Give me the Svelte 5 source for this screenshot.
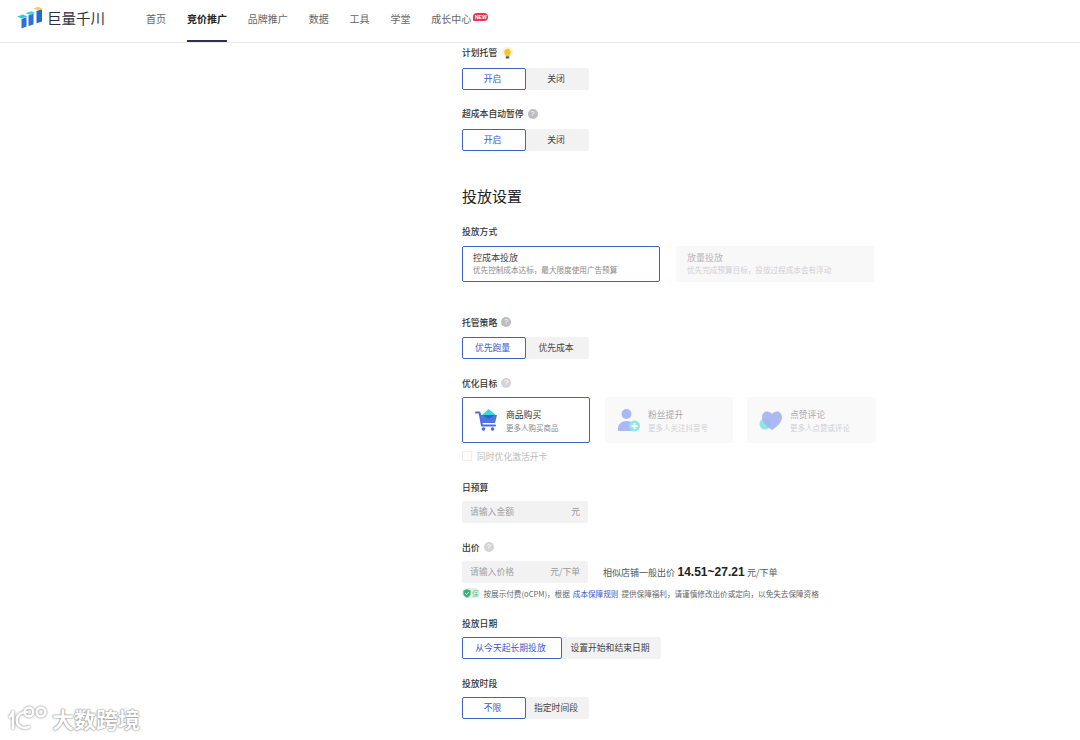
<script>
    const navItems = ['首页', '竞价推广', '品牌推广', '数据', '工具', '学堂', '成长中心'];
    const activeNav = '竞价推广';

    const goals = [
        { key: 'buy', title: '商品购买', desc: '更多人购买商品', active: true },
        { key: 'fans', title: '粉丝提升', desc: '更多人关注抖音号', active: false },
        { key: 'like', title: '点赞评论', desc: '更多人点赞或评论', active: false }
    ];
</script>

<header class="topbar">
    <div class="logo">
        <svg class="logo-mark" width="26" height="23" viewBox="0 0 26 23">
            <path d="M0 10.5 L6 8.5 L10.5 10.5 L4.5 12.5 Z" fill="#35c9d6"/>
            <path d="M4.5 13 L9.5 11.2 L9.5 20.5 L4.5 22.5 Z" fill="#2f6fdc"/>
            <path d="M8.5 7 L14.5 5.2 L18.5 7 L12.5 9 Z" fill="#45d3d8"/>
            <path d="M11.5 9.5 L16.5 7.8 L16.5 18.5 L11.5 20 Z" fill="#2f6fdc"/>
            <path d="M16.5 2.5 L21 0.8 L25.5 2.5 L21 4.2 Z" fill="#f3cf55"/>
            <path d="M19.5 5 L25 3.2 L25 15.5 L19.5 17.2 Z" fill="#2866d0"/>
        </svg>
        <span class="logo-text">巨量千川</span>
    </div>
    <nav class="nav">
        {#each navItems as item}
            <span class="nav-item" class:active={item === activeNav}>
                {item}
                {#if item === '成长中心'}
                    <span class="new-badge">NEW</span>
                {/if}
            </span>
        {/each}
    </nav>
</header>

<main class="form">
    <div class="field">
        <div class="label">计划托管
            <svg class="bulb" width="13" height="13" viewBox="0 0 13 13">
                <circle cx="6.5" cy="5.5" r="6" fill="#fdf6d8"/>
                <path d="M6.5 1.8 a3.4 3.4 0 0 1 2 6.1 v1 h-4 v-1 a3.4 3.4 0 0 1 2-6.1 Z" fill="#f5c52c"/>
                <rect x="4.8" y="9.3" width="3.4" height="2.2" rx="0.6" fill="#555a66"/>
            </svg>
        </div>
        <div class="toggle">
            <span class="opt on">开启</span>
            <span class="opt">关闭</span>
        </div>
    </div>

    <div class="field">
        <div class="label">超成本自动暂停 <span class="help">?</span></div>
        <div class="toggle">
            <span class="opt on">开启</span>
            <span class="opt">关闭</span>
        </div>
    </div>

    <h2 class="section-title">投放设置</h2>

    <div class="field way-field">
        <div class="label">投放方式</div>
        <div class="way-row">
            <div class="way-card selected">
                <div class="way-title">控成本投放</div>
                <div class="way-desc">优先控制成本达标，最大限度使用广告预算</div>
            </div>
            <div class="way-card disabled">
                <div class="way-title">放量投放</div>
                <div class="way-desc">优先完成预算目标，投放过程成本会有浮动</div>
            </div>
        </div>
    </div>

    <div class="field">
        <div class="label low">托管策略 <span class="help">?</span></div>
        <div class="toggle">
            <span class="opt on">优先跑量</span>
            <span class="opt">优先成本</span>
        </div>
    </div>

    <div class="field goal-field">
        <div class="label low tight">优化目标 <span class="help light">?</span></div>
        <div class="goal-row">
            {#each goals as goal}
                <div class="goal-card" class:selected={goal.active} class:disabled={!goal.active}>
                    {#if goal.key === 'buy'}
                        <svg class="goal-icon" width="24" height="24" viewBox="0 0 24 24">
                            <path d="M1 4.5 h3.5 l2.5 13 h13" fill="none" stroke="#4a6ee0" stroke-width="2" stroke-linecap="round" stroke-linejoin="round"/>
                            <path d="M5 7 H22 L20 15 H7 Z" fill="#5273e6"/>
                            <path d="M13.5 1 L20.5 6.5 L13.5 11.5 L7.5 6.5 Z" fill="#3fd5d3"/>
                            <path d="M7.5 7 H20 L13.5 11.5 Z" fill="#2d63d8"/>
                            <circle cx="8.5" cy="21" r="1.8" fill="#4a6ee0"/>
                            <circle cx="17.5" cy="21" r="1.8" fill="#4a6ee0"/>
                        </svg>
                    {:else if goal.key === 'fans'}
                        <svg class="goal-icon" width="24" height="24" viewBox="0 0 24 24">
                            <circle cx="9.5" cy="6" r="5" fill="#aab8f3"/>
                            <path d="M1 23 C0 16 5 13 9.5 13 C14 13 19 16 18 23 Z" fill="#aab8f3"/>
                            <circle cx="17.5" cy="18" r="5.5" fill="#8fe6e3"/>
                            <path d="M17.5 15 v6 M14.5 18 h6" stroke="#fff" stroke-width="1.8"/>
                        </svg>
                    {:else}
                        <svg class="goal-icon" width="24" height="24" viewBox="0 0 24 24">
                            <circle cx="6" cy="16" r="5.5" fill="#8fe6e3"/>
                            <path d="M13 22 C7 18 3 14 3 9 C3 3 10 1.5 13 6 C16 1.5 23 3 23 9 C23 14 19 18 13 22 Z" fill="#a4b4f2" opacity="0.92"/>
                        </svg>
                    {/if}
                    <div>
                        <div class="goal-title">{goal.title}</div>
                        <div class="goal-desc">{goal.desc}</div>
                    </div>
                </div>
            {/each}
        </div>
        <div class="check-row">
            <span class="checkbox"></span>
            <span>同时优化激活开卡</span>
        </div>
    </div>

    <div class="field">
        <div class="label low tight">日预算</div>
        <div class="input">
            <span>请输入金额</span>
            <span class="unit">元</span>
        </div>
    </div>

    <div class="field bid-field">
        <div class="label low tight">出价 <span class="help light">?</span></div>
        <div class="bid-row">
            <div class="input">
                <span>请输入价格</span>
                <span class="unit">元/下单</span>
            </div>
            <div class="bid-hint">
                相似店铺一般出价 <b class="bid-range">14.51~27.21</b> 元/下单
            </div>
        </div>
        <div class="note">
            <span class="shield">
                <svg width="8" height="9" viewBox="0 0 8 9">
                    <path d="M4 0.3 L7.6 1.4 V4.5 C7.6 6.6 5.8 8 4 8.7 C2.2 8 0.4 6.6 0.4 4.5 V1.4 Z" fill="#38b27a"/>
                    <path d="M2.3 4.3 L3.6 5.5 L5.8 3.1" fill="none" stroke="#fff" stroke-width="0.9"/>
                </svg>
                <span>保</span>
            </span>
            <span>按展示付费(oCPM)，根据</span>
            <span class="link">成本保障规则</span>
            <span>提供保障福利，请谨慎修改出价或定向，以免失去保障资格</span>
        </div>
    </div>

    <div class="field">
        <div class="label low tight">投放日期</div>
        <div class="toggle">
            <span class="opt on date-on">从今天起长期投放</span>
            <span class="opt date-off">设置开始和结束日期</span>
        </div>
    </div>

    <div class="field">
        <div class="label low tight">投放时段</div>
        <div class="toggle">
            <span class="opt on">不限</span>
            <span class="opt">指定时间段</span>
        </div>
    </div>
</main>

<div class="watermark">
    <svg width="40" height="24" viewBox="0 0 40 24" fill="none" stroke="#fff" stroke-width="2.6">
        <path d="M5 6 L2 11 M5 6 V22" stroke-linecap="round"/>
        <path d="M19 6 C11 6 8 11 9 16 C10 21 15 23 21 21" stroke-linecap="round"/>
        <circle cx="21" cy="6" r="4.4"/>
        <circle cx="33" cy="6" r="4.4"/>
    </svg>
    <span>大数跨境</span>
</div>

<style>
    :global(body) {
        margin: 0;
        background: #fff;
        overflow: hidden;
    }
    :global(#app) {
        position: relative;
        height: 740px;
        overflow: hidden;
        font-family: "Noto Sans CJK SC", "Liberation Sans", sans-serif;
        color: #333;
    }
    .topbar {
        display: flex;
        align-items: stretch;
        height: 42px;
        border-bottom: 1px solid #e9e9eb;
    }
    .logo {
        display: flex;
        align-items: center;
        gap: 4px;
        padding-left: 17px;
        width: 146px;
        box-sizing: border-box;
        height: 35px;
    }
    .logo-text {
        font-size: 14.5px;
        font-weight: 400;
        color: #2b3040;
    }
    .nav {
        display: flex;
        gap: 20.9px;
    }
    .nav-item {
        position: relative;
        display: flex;
        align-items: center;
        box-sizing: border-box;
        height: 42px;
        padding-bottom: 5px;
        font-size: 10px;
        color: #666;
    }
    .nav-item.active {
        padding-bottom: 3px;
        color: #222;
        font-weight: 700;
        border-bottom: 2px solid #2a3148;
    }
    .new-badge {
        position: absolute;
        left: 42px;
        top: 13px;
        width: 15px;
        height: 8px;
        border-radius: 4px 4px 4px 1px;
        background: #e8384f;
        color: #fff;
        font-size: 5px;
        font-weight: 700;
        line-height: 8px;
        text-align: center;
        font-family: "Liberation Sans", sans-serif;
    }
    .form {
        padding: 3px 0 0 462px;
    }
    .field {
        margin-bottom: 17px;
    }
    .label {
        display: flex;
        align-items: center;
        box-sizing: border-box;
        height: 14px;
        padding-bottom: 2px;
        margin-bottom: 8px;
        font-size: 8.8px;
        font-weight: 500;
        color: #333;
    }
    .label.low {
        padding-bottom: 0;
    }
    .label.tight {
        margin-bottom: 7px;
    }
    .bulb {
        margin: 2px 0 0 4px;
    }
    .help {
        display: inline-block;
        width: 10px;
        height: 10px;
        margin: 2px 0 0 4px;
        border-radius: 50%;
        background: #bcbcc0;
        color: #fff;
        font-size: 8px;
        font-weight: 400;
        line-height: 10px;
        text-align: center;
        font-family: "Liberation Sans", sans-serif;
    }
    .low .help {
        margin-top: 0;
    }
    .help.light {
        background: #d4d4d6;
    }
    .toggle {
        display: flex;
        width: fit-content;
        border-radius: 2px;
        background: #f2f2f3;
    }
    .opt {
        box-sizing: border-box;
        width: 63px;
        height: 22px;
        padding-right: 3px;
        font-size: 8.8px;
        line-height: 22px;
        text-align: center;
        color: #444;
    }
    .opt.on {
        width: 64px;
        border: 1px solid #3f62c8;
        border-radius: 2px;
        background: #fff;
        color: #3459c9;
        line-height: 20px;
    }
    .opt.on.date-on {
        width: 100px;
    }
    .opt.date-off {
        width: 99px;
    }
    .section-title {
        height: 22px;
        margin: 35px 0 17px;
        font-size: 15px;
        font-weight: 400;
        line-height: 20px;
        color: #222;
    }
    .way-field {
        margin-bottom: 33px;
    }
    .way-field .label {
        margin-bottom: 7px;
    }
    .way-row {
        display: flex;
        gap: 16px;
    }
    .way-card {
        box-sizing: border-box;
        width: 198px;
        height: 36px;
        padding: 4px 10px;
        border-radius: 2px;
    }
    .way-card.selected {
        border: 1px solid #3f62c8;
    }
    .way-card.disabled {
        padding: 5px 11px;
        background: #f8f8f9;
        color: #bbb;
    }
    .way-title {
        font-size: 9px;
        line-height: 13px;
        color: #444;
    }
    .way-desc {
        font-size: 7.6px;
        line-height: 12px;
        color: #888;
    }
    .disabled .way-title {
        color: #b5b5b8;
    }
    .disabled .way-desc {
        color: #d0d0d3;
    }
    .goal-field {
        margin-bottom: 18px;
    }
    .goal-row {
        display: flex;
        gap: 14px;
    }
    .goal-card {
        display: flex;
        align-items: center;
        gap: 7px;
        box-sizing: border-box;
        width: 128px;
        height: 46px;
        padding-left: 12px;
        border-radius: 2px;
    }
    .goal-card.selected {
        width: 127.5px;
        margin-right: 1.5px;
        border: 1px solid #3f62c8;
    }
    .goal-card.disabled {
        background: #f9f9fa;
    }
    .goal-card:last-child {
        width: 129px;
    }
    .goal-title {
        font-size: 8.8px;
        line-height: 13px;
        color: #333;
    }
    .goal-desc {
        margin-top: 1px;
        font-size: 7.5px;
        line-height: 11px;
        color: #888;
    }
    .disabled .goal-title {
        color: #a8a8ab;
    }
    .disabled .goal-desc {
        color: #d0d0d3;
    }
    .check-row {
        display: flex;
        align-items: center;
        gap: 5px;
        height: 12px;
        margin-top: 7px;
        font-size: 8.8px;
        color: #bbb;
    }
    .checkbox {
        box-sizing: border-box;
        width: 10px;
        height: 10px;
        border: 1px solid #eee;
        border-radius: 1px;
    }
    .input {
        display: flex;
        justify-content: space-between;
        align-items: center;
        box-sizing: border-box;
        width: 126px;
        height: 22px;
        padding: 0 8px 1px;
        border-radius: 2px;
        background: #f2f2f3;
        font-size: 8.8px;
        color: #a0a0a3;
    }
    .unit {
        color: #999;
    }
    .bid-row {
        display: flex;
        align-items: center;
        gap: 15px;
    }
    .bid-hint {
        display: flex;
        align-items: center;
        gap: 2.5px;
        font-size: 9px;
        color: #555;
    }
    .bid-range {
        font-family: "Liberation Sans", sans-serif;
        font-size: 12px;
        font-weight: 700;
        color: #222;
    }
    .note {
        display: flex;
        align-items: center;
        gap: 3px;
        height: 12px;
        margin-top: 4px;
        font-size: 7.6px;
        color: #666;
    }
    .shield {
        display: flex;
        align-items: center;
        gap: 1px;
        height: 10px;
        padding: 0 1px;
        margin-right: 1px;
        border-radius: 5px;
        background: #dcf3e6;
        color: #6fbe98;
        font-size: 6.5px;
    }
    .link {
        color: #3459c9;
    }
    .watermark {
        position: absolute;
        left: 8px;
        bottom: 6px;
        display: flex;
        align-items: center;
        gap: 4px;
        color: #fff;
        font-size: 22px;
        font-weight: 700;
        text-shadow: 0 0 2px #777, 0 0 1px #777;
    }
    .watermark svg {
        filter: drop-shadow(0 0 1px #777);
    }
</style>
